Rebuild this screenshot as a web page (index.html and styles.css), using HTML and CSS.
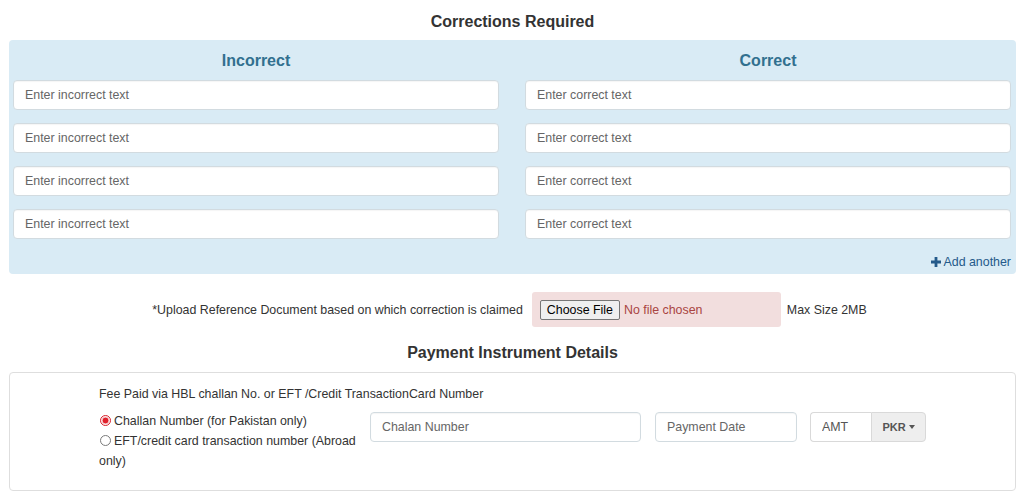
FILE: index.html
```html
<!DOCTYPE html>
<html lang="en">
<head>
<meta charset="utf-8">
<title>Corrections Required</title>
<link rel="stylesheet" href="styles.css">
</head>
<body>
<div class="page">
  <h3 class="section-title">Corrections Required</h3>
  <div class="corrections">
    <div class="col">
      <h4 class="col-title">Incorrect</h4>
      <input class="field" type="text" placeholder="Enter incorrect text">
      <input class="field" type="text" placeholder="Enter incorrect text">
      <input class="field" type="text" placeholder="Enter incorrect text">
      <input class="field" type="text" placeholder="Enter incorrect text">
    </div>
    <div class="col">
      <h4 class="col-title">Correct</h4>
      <input class="field" type="text" placeholder="Enter correct text">
      <input class="field" type="text" placeholder="Enter correct text">
      <input class="field" type="text" placeholder="Enter correct text">
      <input class="field" type="text" placeholder="Enter correct text">
      <a class="add-link" href="#"><svg class="plus" viewBox="0 0 10 10" width="10" height="10"><path d="M3.6 0h2.8v3.6H10v2.8H6.4V10H3.6V6.4H0V3.6h3.6z" fill="currentColor"/></svg>Add another</a>
    </div>
  </div>

  <div class="upload-row">
    <span class="upload-label">*Upload Reference Document based on which correction is claimed</span>
    <div class="upload-box">
      <input class="file" type="file">
    </div>
    <span class="upload-max">Max Size 2MB</span>
  </div>

  <h3 class="section-title pay-title">Payment Instrument Details</h3>
  <div class="payment">
    <p class="fee-label">Fee Paid via HBL challan No. or EFT /Credit TransactionCard Number</p>
    <div class="pay-row">
      <div class="radios">
        <label class="radio-line"><span class="radio checked"></span>Challan Number (for Pakistan only)</label>
        <label class="radio-line"><span class="radio"></span>EFT/credit card transaction number (Abroad only)</label>
      </div>
      <input class="field pay-field chalan" type="text" placeholder="Chalan Number">
      <input class="field pay-field date" type="text" placeholder="Payment Date">
      <div class="amt-group">
        <input class="amt" type="text" value="AMT">
        <button class="pkr" type="button">PKR <span class="caret"></span></button>
      </div>
    </div>
  </div>
</div>
</body>
</html>
```

FILE: styles.css
```css
* { box-sizing: border-box; }

body {
  margin: 0;
  font-family: "Liberation Sans", Arial, sans-serif;
  font-size: 12.4px;
  color: #333;
  background: #fff;
}

.page {
  padding: 12px 8px 0 9px;
}

.section-title {
  margin: 0;
  font-size: 16px;
  line-height: 20px;
  font-weight: bold;
  text-align: center;
  color: #333;
}

.corrections {
  margin-top: 8px;
  background: #d9ebf5;
  border-radius: 4px;
  padding: 11px 5px 3px 4px;
  display: grid;
  grid-template-columns: 486px 486px;
  column-gap: 26px;
}

.col {
  display: flex;
  flex-direction: column;
  gap: 13px;
}

.col-title {
  margin: 0 0 -4px;
  font-size: 16px;
  line-height: 20px;
  font-weight: bold;
  text-align: center;
  color: #31708f;
}

.field {
  display: block;
  height: 30px;
  width: 100%;
  border: 1px solid #d2dbe0;
  border-radius: 4px;
  background: #fff;
  padding: 0 11px 1px;
  font-family: "Liberation Sans", Arial, sans-serif;
  font-size: 12.4px;
  color: #555;
  box-shadow: inset 0 1px 1px rgba(0,0,0,0.04);
  outline: none;
}

.field::placeholder { color: #666; }

.add-link {
  align-self: flex-end;
  display: flex;
  align-items: center;
  gap: 2px;
  height: 18px;
  margin-top: 1px;
  color: #245a8a;
  text-decoration: none;
  font-size: 12.4px;
}

.plus { display: block; }

.upload-row {
  margin-top: 18px;
  display: flex;
  align-items: center;
  justify-content: center;
  padding-right: 6px;
}

.upload-label { margin-right: 9px; }

.upload-box {
  width: 249px;
  height: 35px;
  background: #f2dede;
  border-radius: 3px;
  padding: 0 8px;
  display: flex;
  align-items: center;
}

.file {
  font-family: "Liberation Sans", Arial, sans-serif;
  font-size: 12.4px;
  color: #a94442;
  width: 233px;
}

.file::file-selector-button {
  font-family: "Liberation Sans", Arial, sans-serif;
  font-size: 12.4px;
  color: #000;
  background: #efefef;
  border: 1px solid #767676;
  border-radius: 2px;
  padding: 2px 6px;
  margin-right: 4px;
}

.upload-max { margin-left: 6px; }

.pay-title { margin-top: 16px; }

.payment {
  margin-top: 9px;
  border: 1px solid #dedede;
  border-radius: 4px;
  padding: 12px 0 19px 89px;
}

.fee-label {
  margin: 0;
  line-height: 18px;
}

.pay-row {
  margin-top: 8px;
  display: flex;
  align-items: flex-start;
}

.radios {
  width: 261px;
  margin-right: 10px;
  display: flex;
  flex-direction: column;
}

.radio-line {
  display: block;
  line-height: 20px;
}

.radio {
  display: inline-block;
  width: 11px;
  height: 11px;
  border-radius: 50%;
  border: 1px solid #7a7a7a;
  background: #fff;
  vertical-align: -1px;
  margin: 0 3px 0 1px;
}

.radio.checked {
  border-color: #d71f2a;
  background: radial-gradient(circle, #e0202b 0 2.6px, #f6c6c9 3.2px 3.8px, #fff 4.2px);
}

.pay-field { margin-top: 1px; }

.chalan { width: 271px; margin-right: 14px; }

.date { width: 142px; margin-right: 13px; }

.amt-group {
  margin-top: 1px;
  display: flex;
  height: 30px;
}

.amt {
  width: 61px;
  height: 30px;
  border: 1px solid #d9d9d9;
  border-right: none;
  border-radius: 4px 0 0 4px;
  padding: 0 11px 1px;
  font-family: "Liberation Sans", Arial, sans-serif;
  font-size: 12.4px;
  color: #555;
  outline: none;
}

.pkr {
  width: 55px;
  height: 30px;
  border: 1px solid #d9d9d9;
  border-radius: 0 4px 4px 0;
  background: #eee;
  font-family: "Liberation Sans", Arial, sans-serif;
  font-size: 11px;
  font-weight: bold;
  color: #555;
  padding: 0;
  display: flex;
  align-items: center;
  justify-content: center;
  gap: 3px;
}

.caret {
  width: 0;
  height: 0;
  border-left: 3.5px solid transparent;
  border-right: 3.5px solid transparent;
  border-top: 4px solid #555;
}
```
